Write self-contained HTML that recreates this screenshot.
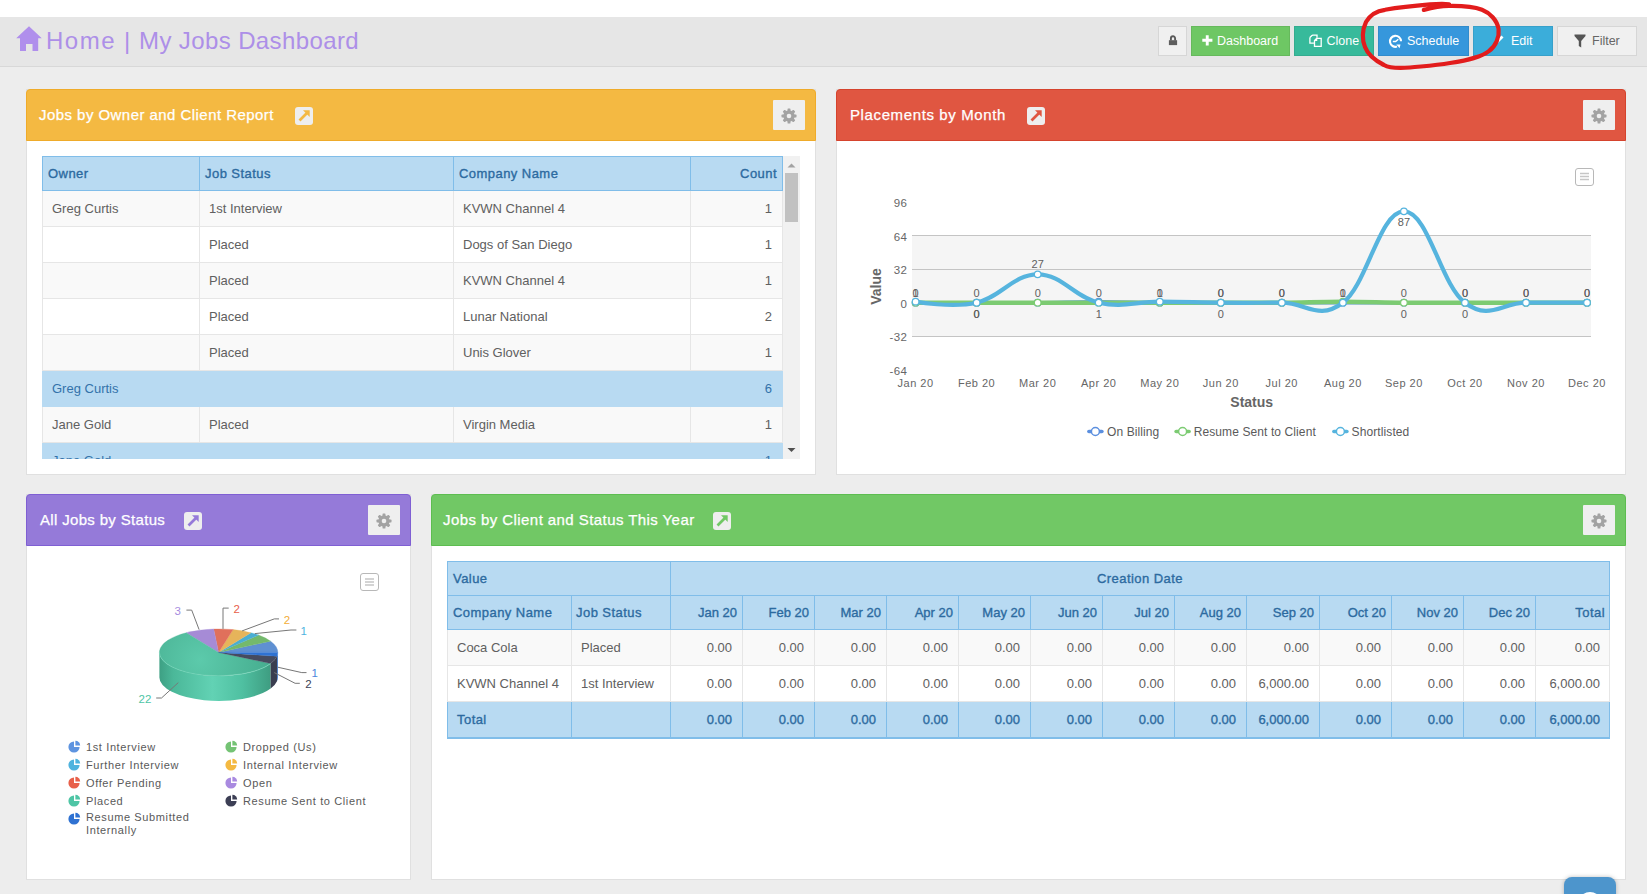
<!DOCTYPE html><html><head><meta charset="utf-8"><style>
*{box-sizing:border-box;margin:0;padding:0}
html,body{width:1647px;height:894px;overflow:hidden;background:#ededed;font-family:"Liberation Sans",sans-serif;position:relative}
.abs{position:absolute}
.topw{left:0;top:0;width:1647px;height:17px;background:#fff}
.hdr{left:0;top:17px;width:1647px;height:50px;background:#e6e6e6;border-bottom:1px solid #d8d8d8}
.title{left:48px;top:26px;font-size:24px;color:#ad8fe8;white-space:nowrap;line-height:30px;letter-spacing:0.48px}
.btn{top:26px;height:30px;color:#fff;font-size:13px;line-height:29px;white-space:nowrap;border:1px solid rgba(0,0,0,0.08)}
.panel{background:#fff;border:1px solid #e0e0e0}
.ph{border-radius:4px 4px 0 0;height:52px}
.pt{color:#fff;font-size:15px;white-space:nowrap;line-height:20px;-webkit-text-stroke:0.25px #fff}
.gear{width:32px;height:30px;background:#efefef;border-radius:1px}
.exp{width:18px;height:18px;background:#ececec;border-radius:3px}
.cell{position:absolute;white-space:nowrap;font-size:13px;line-height:16px}
</style></head><body>
<div class="abs topw"></div><div class="abs hdr"></div>
<svg class="abs" style="left:14px;top:24px" width="30" height="30" viewBox="0 0 30 30"><path d="M2.2 14.2 L15 2.2 L27.8 14.2 L24.2 14.2 L24.2 27 L18.5 27 L18.5 20 L12 20 L12 27 L6 27 L6 14.2 Z" fill="#b08fec"/></svg>
<div class="abs title" style="left:46px;letter-spacing:1.5px">Home</div><div class="abs title" style="left:124px;letter-spacing:0">|</div><div class="abs title" style="left:139px;letter-spacing:0.39px">My Jobs Dashboard</div>
<div class="abs btn" style="left:1158px;width:29px;background:#f0f0f0;border-color:#d6d6d6"></div>
<svg class="abs" style="left:1166px;top:33px" width="12" height="14" viewBox="0 0 12 14"><path d="M4.9 7.5 V5.4 A2.1 2.1 0 0 1 9.1 5.4 V7.5" fill="none" stroke="#5a5a5a" stroke-width="1.9"/><rect x="2.9" y="7.2" width="8.2" height="4.9" fill="#5e5e5e"/></svg>
<div class="abs btn" style="left:1191px;width:99px;background:#6ec764;color:#fff;border-color:rgba(0,0,0,0.07)"></div>
<svg class="abs" style="left:1202px;top:35px" width="11" height="11" viewBox="0 0 11 11"><path d="M3.8 0.3h2.9v3.5h3.7v2.9h-3.7v3.7h-2.9v-3.7h-3.5v-2.9h3.5z" fill="#fff"/></svg>
<div class="abs" style="left:1217px;top:33px;font-size:12.5px;line-height:16px;color:#fff;white-space:nowrap">Dashboard</div>
<div class="abs btn" style="left:1294px;width:80px;background:#37ba9b;color:#fff;border-color:rgba(0,0,0,0.07)"></div>
<svg class="abs" style="left:1308px;top:33px" width="16" height="16" viewBox="0 0 16 16"><path d="M4.2 2.2 H9 V4.8 M1.9 4.5 L4.2 2.2 M1.9 4.5 V10.2 H6" fill="none" stroke="#fff" stroke-width="1.3"/><path d="M8.6 5.3 H13.2 V13.3 H6.5 V7.4 Z M6.5 7.4 H8.6 V5.3" fill="none" stroke="#fff" stroke-width="1.3"/></svg>
<div class="abs" style="left:1326.5px;top:33px;font-size:12.5px;line-height:16px;color:#fff;white-space:nowrap">Clone</div>
<div class="abs btn" style="left:1378px;width:91px;background:#3697dc;color:#fff;border-color:rgba(0,0,0,0.07)"></div>
<svg class="abs" style="left:1388px;top:34px" width="16" height="16" viewBox="0 0 16 16"><path d="M13 7.3 A5.5 5.5 0 1 0 9 12.6" fill="none" stroke="#fff" stroke-width="2.1"/><path d="M8.3 10.6 L12.5 10.6 L11.6 14.2 Z" fill="#fff"/><path d="M4.8 7.6 L7.6 7.6 L10.3 5.2" fill="none" stroke="#fff" stroke-width="1.5"/></svg>
<div class="abs" style="left:1407px;top:33px;font-size:12.5px;line-height:16px;color:#fff;white-space:nowrap">Schedule</div>
<div class="abs btn" style="left:1473px;width:80px;background:#3badda;color:#fff;border-color:rgba(0,0,0,0.07)"></div>
<svg class="abs" style="left:1493px;top:34px" width="12" height="12" viewBox="0 0 12 12"><path d="M1 11 L2 8 L8.5 1.5 L10.5 3.5 L4 10 Z" fill="#fff"/></svg>
<div class="abs" style="left:1511px;top:33px;font-size:12.5px;line-height:16px;color:#fff;white-space:nowrap">Edit</div>
<div class="abs btn" style="left:1557px;width:80px;background:#f0f0f0;border-color:#d6d6d6"></div>
<svg class="abs" style="left:1574px;top:34px" width="12" height="14" viewBox="0 0 12 14"><path d="M0.5 0.5 H11.5 V2 L7.2 7 V13.5 L4.8 12 V7 L0.5 2 Z" fill="#555"/></svg>
<div class="abs" style="left:1592px;top:33px;font-size:12.5px;line-height:16px;color:#666;white-space:nowrap">Filter</div>
<svg class="abs" style="left:0;top:0" width="1647" height="80" viewBox="0 0 1647 80"><path d="M1423.8 9.9 C1432 7.8 1440 6.2 1449 6 C1462 5.8 1474 6.8 1482 9.8 C1490 13 1497 20 1498.6 29 C1499.5 37 1496 46 1489 51 C1482 57 1468 60 1450 63 C1435 65.5 1425 66 1410 67.5 C1398 68.5 1390 68.5 1384 65 C1376 61 1368 55 1365 47 C1362 40 1362 30 1366 22 C1370 15 1376 11 1385 9.8 C1398 7.5 1415 5.6 1430 4.4 C1440 3.8 1446 3.8 1449 4.4" fill="none" stroke="#e21c1c" stroke-width="4.2" stroke-linecap="round" stroke-linejoin="round"/></svg>
<div class="abs panel" style="left:26px;top:89px;width:790px;height:386px"></div>
<div class="abs ph" style="left:26px;top:89px;width:790px;background:#f4b942;border:1px solid #efab2a"></div>
<div class="abs pt" style="left:39px;top:104.5px;letter-spacing:0.450px">Jobs by Owner and Client Report</div>
<svg class="abs" style="left:295px;top:107px" width="18" height="18" viewBox="0 0 18 18"><rect x="0" y="0" width="18" height="18" rx="3" fill="#eeeeee"/><path d="M4.5 13.5 L12.5 5.5" stroke="#f4b942" stroke-width="2.6"/><path d="M8 3.3 H14.7 V10 Z" fill="#f4b942"/></svg>
<div class="abs gear" style="left:773px;top:100px"></div>
<svg class="abs" style="left:779.20px;top:105.60px" width="20" height="20" viewBox="-10 -10 20 20"><circle r="5.7" fill="#a3a3a3"/><rect x="-1.45" y="-7.5" width="2.9" height="4" rx="0.6" fill="#a3a3a3" transform="rotate(0)"/><rect x="-1.45" y="-7.5" width="2.9" height="4" rx="0.6" fill="#a3a3a3" transform="rotate(45)"/><rect x="-1.45" y="-7.5" width="2.9" height="4" rx="0.6" fill="#a3a3a3" transform="rotate(90)"/><rect x="-1.45" y="-7.5" width="2.9" height="4" rx="0.6" fill="#a3a3a3" transform="rotate(135)"/><rect x="-1.45" y="-7.5" width="2.9" height="4" rx="0.6" fill="#a3a3a3" transform="rotate(180)"/><rect x="-1.45" y="-7.5" width="2.9" height="4" rx="0.6" fill="#a3a3a3" transform="rotate(225)"/><rect x="-1.45" y="-7.5" width="2.9" height="4" rx="0.6" fill="#a3a3a3" transform="rotate(270)"/><rect x="-1.45" y="-7.5" width="2.9" height="4" rx="0.6" fill="#a3a3a3" transform="rotate(315)"/><circle r="2.3" fill="#efefef"/></svg>
<div class="abs panel" style="left:836px;top:89px;width:790px;height:386px"></div>
<div class="abs ph" style="left:836px;top:89px;width:790px;background:#e05641;border:1px solid #d5432d"></div>
<div class="abs pt" style="left:850px;top:104.5px;letter-spacing:0.620px">Placements by Month</div>
<svg class="abs" style="left:1027px;top:107px" width="18" height="18" viewBox="0 0 18 18"><rect x="0" y="0" width="18" height="18" rx="3" fill="#eeeeee"/><path d="M4.5 13.5 L12.5 5.5" stroke="#e05641" stroke-width="2.6"/><path d="M8 3.3 H14.7 V10 Z" fill="#e05641"/></svg>
<div class="abs gear" style="left:1583px;top:100px"></div>
<svg class="abs" style="left:1589.20px;top:105.60px" width="20" height="20" viewBox="-10 -10 20 20"><circle r="5.7" fill="#a3a3a3"/><rect x="-1.45" y="-7.5" width="2.9" height="4" rx="0.6" fill="#a3a3a3" transform="rotate(0)"/><rect x="-1.45" y="-7.5" width="2.9" height="4" rx="0.6" fill="#a3a3a3" transform="rotate(45)"/><rect x="-1.45" y="-7.5" width="2.9" height="4" rx="0.6" fill="#a3a3a3" transform="rotate(90)"/><rect x="-1.45" y="-7.5" width="2.9" height="4" rx="0.6" fill="#a3a3a3" transform="rotate(135)"/><rect x="-1.45" y="-7.5" width="2.9" height="4" rx="0.6" fill="#a3a3a3" transform="rotate(180)"/><rect x="-1.45" y="-7.5" width="2.9" height="4" rx="0.6" fill="#a3a3a3" transform="rotate(225)"/><rect x="-1.45" y="-7.5" width="2.9" height="4" rx="0.6" fill="#a3a3a3" transform="rotate(270)"/><rect x="-1.45" y="-7.5" width="2.9" height="4" rx="0.6" fill="#a3a3a3" transform="rotate(315)"/><circle r="2.3" fill="#efefef"/></svg>
<div class="abs panel" style="left:26px;top:494px;width:385px;height:386px"></div>
<div class="abs ph" style="left:26px;top:494px;width:385px;background:#957ad9;border:1px solid #7f5fd3"></div>
<div class="abs pt" style="left:40px;top:509.5px;letter-spacing:0.330px">All Jobs by Status</div>
<svg class="abs" style="left:184px;top:512px" width="18" height="18" viewBox="0 0 18 18"><rect x="0" y="0" width="18" height="18" rx="3" fill="#eeeeee"/><path d="M4.5 13.5 L12.5 5.5" stroke="#957ad9" stroke-width="2.6"/><path d="M8 3.3 H14.7 V10 Z" fill="#957ad9"/></svg>
<div class="abs gear" style="left:368px;top:505px"></div>
<svg class="abs" style="left:374.20px;top:510.60px" width="20" height="20" viewBox="-10 -10 20 20"><circle r="5.7" fill="#a3a3a3"/><rect x="-1.45" y="-7.5" width="2.9" height="4" rx="0.6" fill="#a3a3a3" transform="rotate(0)"/><rect x="-1.45" y="-7.5" width="2.9" height="4" rx="0.6" fill="#a3a3a3" transform="rotate(45)"/><rect x="-1.45" y="-7.5" width="2.9" height="4" rx="0.6" fill="#a3a3a3" transform="rotate(90)"/><rect x="-1.45" y="-7.5" width="2.9" height="4" rx="0.6" fill="#a3a3a3" transform="rotate(135)"/><rect x="-1.45" y="-7.5" width="2.9" height="4" rx="0.6" fill="#a3a3a3" transform="rotate(180)"/><rect x="-1.45" y="-7.5" width="2.9" height="4" rx="0.6" fill="#a3a3a3" transform="rotate(225)"/><rect x="-1.45" y="-7.5" width="2.9" height="4" rx="0.6" fill="#a3a3a3" transform="rotate(270)"/><rect x="-1.45" y="-7.5" width="2.9" height="4" rx="0.6" fill="#a3a3a3" transform="rotate(315)"/><circle r="2.3" fill="#efefef"/></svg>
<div class="abs panel" style="left:431px;top:494px;width:1195px;height:386px"></div>
<div class="abs ph" style="left:431px;top:494px;width:1195px;background:#71c865;border:1px solid #5dbd50"></div>
<div class="abs pt" style="left:443px;top:509.5px;letter-spacing:0.430px">Jobs by Client and Status This Year</div>
<svg class="abs" style="left:713px;top:512px" width="18" height="18" viewBox="0 0 18 18"><rect x="0" y="0" width="18" height="18" rx="3" fill="#eeeeee"/><path d="M4.5 13.5 L12.5 5.5" stroke="#71c865" stroke-width="2.6"/><path d="M8 3.3 H14.7 V10 Z" fill="#71c865"/></svg>
<div class="abs gear" style="left:1583px;top:505px"></div>
<svg class="abs" style="left:1589.20px;top:510.60px" width="20" height="20" viewBox="-10 -10 20 20"><circle r="5.7" fill="#a3a3a3"/><rect x="-1.45" y="-7.5" width="2.9" height="4" rx="0.6" fill="#a3a3a3" transform="rotate(0)"/><rect x="-1.45" y="-7.5" width="2.9" height="4" rx="0.6" fill="#a3a3a3" transform="rotate(45)"/><rect x="-1.45" y="-7.5" width="2.9" height="4" rx="0.6" fill="#a3a3a3" transform="rotate(90)"/><rect x="-1.45" y="-7.5" width="2.9" height="4" rx="0.6" fill="#a3a3a3" transform="rotate(135)"/><rect x="-1.45" y="-7.5" width="2.9" height="4" rx="0.6" fill="#a3a3a3" transform="rotate(180)"/><rect x="-1.45" y="-7.5" width="2.9" height="4" rx="0.6" fill="#a3a3a3" transform="rotate(225)"/><rect x="-1.45" y="-7.5" width="2.9" height="4" rx="0.6" fill="#a3a3a3" transform="rotate(270)"/><rect x="-1.45" y="-7.5" width="2.9" height="4" rx="0.6" fill="#a3a3a3" transform="rotate(315)"/><circle r="2.3" fill="#efefef"/></svg>
<div class="abs" style="left:1564px;top:877px;width:52px;height:40px;background:#4d95cc;border-radius:8px;box-shadow:0 0 4px rgba(0,0,0,0.25)"></div>
<div class="abs" style="left:1578px;top:892px;width:24px;height:14px;background:#fff;border-radius:12px 12px 0 0"></div>
<div class="abs" style="left:42px;top:156px;width:758px;height:303px;overflow:hidden">
<div class="abs" style="left:0px;top:0px;width:741px;height:35px;background:#b8daf2;border:1px solid #80bde9"></div>
<div class="abs" style="left:157px;top:0px;width:1px;height:35px;background:#80bde9;"></div>
<div class="abs" style="left:411px;top:0px;width:1px;height:35px;background:#80bde9;"></div>
<div class="abs" style="left:648px;top:0px;width:1px;height:35px;background:#80bde9;"></div>
<div class="abs" style="left:6px;top:0px;height:35px;line-height:35px;font-size:13px;color:#2c6aa0;white-space:nowrap;font-weight:normal;-webkit-text-stroke:0.35px #2c6aa0;letter-spacing:0.45px;">Owner</div>
<div class="abs" style="left:163px;top:0px;height:35px;line-height:35px;font-size:13px;color:#2c6aa0;white-space:nowrap;font-weight:normal;-webkit-text-stroke:0.35px #2c6aa0;letter-spacing:0.45px;">Job Status</div>
<div class="abs" style="left:417px;top:0px;height:35px;line-height:35px;font-size:13px;color:#2c6aa0;white-space:nowrap;font-weight:normal;-webkit-text-stroke:0.35px #2c6aa0;letter-spacing:0.45px;">Company Name</div>
<div class="abs" style="right:23px;top:0px;height:35px;line-height:35px;font-size:13px;color:#2c6aa0;white-space:nowrap;font-weight:normal;-webkit-text-stroke:0.35px #2c6aa0;letter-spacing:0.45px;">Count</div>
<div class="abs" style="left:0px;top:35px;width:741px;height:36px;background:#f9f9f9;border-bottom:1px solid #e6e6e6;border-left:1px solid #e6e6e6;border-right:1px solid #e6e6e6"></div>
<div class="abs" style="left:157px;top:35px;width:1px;height:36px;background:#e6e6e6;"></div>
<div class="abs" style="left:411px;top:35px;width:1px;height:36px;background:#e6e6e6;"></div>
<div class="abs" style="left:648px;top:35px;width:1px;height:36px;background:#e6e6e6;"></div>
<div class="abs" style="left:10px;top:35px;height:36px;line-height:36px;font-size:13px;color:#606060;white-space:nowrap;">Greg Curtis</div>
<div class="abs" style="left:167px;top:35px;height:36px;line-height:36px;font-size:13px;color:#606060;white-space:nowrap;">1st Interview</div>
<div class="abs" style="left:421px;top:35px;height:36px;line-height:36px;font-size:13px;color:#606060;white-space:nowrap;">KVWN Channel 4</div>
<div class="abs" style="right:28px;top:35px;height:36px;line-height:36px;font-size:13px;color:#606060;white-space:nowrap;">1</div>
<div class="abs" style="left:0px;top:71px;width:741px;height:36px;background:#ffffff;border-bottom:1px solid #e6e6e6;border-left:1px solid #e6e6e6;border-right:1px solid #e6e6e6"></div>
<div class="abs" style="left:157px;top:71px;width:1px;height:36px;background:#e6e6e6;"></div>
<div class="abs" style="left:411px;top:71px;width:1px;height:36px;background:#e6e6e6;"></div>
<div class="abs" style="left:648px;top:71px;width:1px;height:36px;background:#e6e6e6;"></div>
<div class="abs" style="left:10px;top:71px;height:36px;line-height:36px;font-size:13px;color:#606060;white-space:nowrap;"></div>
<div class="abs" style="left:167px;top:71px;height:36px;line-height:36px;font-size:13px;color:#606060;white-space:nowrap;">Placed</div>
<div class="abs" style="left:421px;top:71px;height:36px;line-height:36px;font-size:13px;color:#606060;white-space:nowrap;">Dogs of San Diego</div>
<div class="abs" style="right:28px;top:71px;height:36px;line-height:36px;font-size:13px;color:#606060;white-space:nowrap;">1</div>
<div class="abs" style="left:0px;top:107px;width:741px;height:36px;background:#f9f9f9;border-bottom:1px solid #e6e6e6;border-left:1px solid #e6e6e6;border-right:1px solid #e6e6e6"></div>
<div class="abs" style="left:157px;top:107px;width:1px;height:36px;background:#e6e6e6;"></div>
<div class="abs" style="left:411px;top:107px;width:1px;height:36px;background:#e6e6e6;"></div>
<div class="abs" style="left:648px;top:107px;width:1px;height:36px;background:#e6e6e6;"></div>
<div class="abs" style="left:10px;top:107px;height:36px;line-height:36px;font-size:13px;color:#606060;white-space:nowrap;"></div>
<div class="abs" style="left:167px;top:107px;height:36px;line-height:36px;font-size:13px;color:#606060;white-space:nowrap;">Placed</div>
<div class="abs" style="left:421px;top:107px;height:36px;line-height:36px;font-size:13px;color:#606060;white-space:nowrap;">KVWN Channel 4</div>
<div class="abs" style="right:28px;top:107px;height:36px;line-height:36px;font-size:13px;color:#606060;white-space:nowrap;">1</div>
<div class="abs" style="left:0px;top:143px;width:741px;height:36px;background:#ffffff;border-bottom:1px solid #e6e6e6;border-left:1px solid #e6e6e6;border-right:1px solid #e6e6e6"></div>
<div class="abs" style="left:157px;top:143px;width:1px;height:36px;background:#e6e6e6;"></div>
<div class="abs" style="left:411px;top:143px;width:1px;height:36px;background:#e6e6e6;"></div>
<div class="abs" style="left:648px;top:143px;width:1px;height:36px;background:#e6e6e6;"></div>
<div class="abs" style="left:10px;top:143px;height:36px;line-height:36px;font-size:13px;color:#606060;white-space:nowrap;"></div>
<div class="abs" style="left:167px;top:143px;height:36px;line-height:36px;font-size:13px;color:#606060;white-space:nowrap;">Placed</div>
<div class="abs" style="left:421px;top:143px;height:36px;line-height:36px;font-size:13px;color:#606060;white-space:nowrap;">Lunar National</div>
<div class="abs" style="right:28px;top:143px;height:36px;line-height:36px;font-size:13px;color:#606060;white-space:nowrap;">2</div>
<div class="abs" style="left:0px;top:179px;width:741px;height:36px;background:#f9f9f9;border-bottom:1px solid #e6e6e6;border-left:1px solid #e6e6e6;border-right:1px solid #e6e6e6"></div>
<div class="abs" style="left:157px;top:179px;width:1px;height:36px;background:#e6e6e6;"></div>
<div class="abs" style="left:411px;top:179px;width:1px;height:36px;background:#e6e6e6;"></div>
<div class="abs" style="left:648px;top:179px;width:1px;height:36px;background:#e6e6e6;"></div>
<div class="abs" style="left:10px;top:179px;height:36px;line-height:36px;font-size:13px;color:#606060;white-space:nowrap;"></div>
<div class="abs" style="left:167px;top:179px;height:36px;line-height:36px;font-size:13px;color:#606060;white-space:nowrap;">Placed</div>
<div class="abs" style="left:421px;top:179px;height:36px;line-height:36px;font-size:13px;color:#606060;white-space:nowrap;">Unis Glover</div>
<div class="abs" style="right:28px;top:179px;height:36px;line-height:36px;font-size:13px;color:#606060;white-space:nowrap;">1</div>
<div class="abs" style="left:0px;top:215px;width:741px;height:36px;background:#b8daf2;"></div>
<div class="abs" style="left:10px;top:215px;height:36px;line-height:36px;font-size:13px;color:#3372aa;white-space:nowrap;">Greg Curtis</div>
<div class="abs" style="right:28px;top:215px;height:36px;line-height:36px;font-size:13px;color:#3372aa;white-space:nowrap;">6</div>
<div class="abs" style="left:0px;top:251px;width:741px;height:36px;background:#f9f9f9;border-bottom:1px solid #e6e6e6;border-left:1px solid #e6e6e6;border-right:1px solid #e6e6e6"></div>
<div class="abs" style="left:157px;top:251px;width:1px;height:36px;background:#e6e6e6;"></div>
<div class="abs" style="left:411px;top:251px;width:1px;height:36px;background:#e6e6e6;"></div>
<div class="abs" style="left:648px;top:251px;width:1px;height:36px;background:#e6e6e6;"></div>
<div class="abs" style="left:10px;top:251px;height:36px;line-height:36px;font-size:13px;color:#606060;white-space:nowrap;">Jane Gold</div>
<div class="abs" style="left:167px;top:251px;height:36px;line-height:36px;font-size:13px;color:#606060;white-space:nowrap;">Placed</div>
<div class="abs" style="left:421px;top:251px;height:36px;line-height:36px;font-size:13px;color:#606060;white-space:nowrap;">Virgin Media</div>
<div class="abs" style="right:28px;top:251px;height:36px;line-height:36px;font-size:13px;color:#606060;white-space:nowrap;">1</div>
<div class="abs" style="left:0px;top:287px;width:741px;height:36px;background:#b8daf2;"></div>
<div class="abs" style="left:10px;top:287px;height:36px;line-height:36px;font-size:13px;color:#3372aa;white-space:nowrap;">Jane Gold</div>
<div class="abs" style="right:28px;top:287px;height:36px;line-height:36px;font-size:13px;color:#3372aa;white-space:nowrap;">1</div>
<div class="abs" style="left:741px;top:0px;width:17px;height:303px;background:#f1f1f1;"></div>
<div class="abs" style="left:743px;top:17px;width:13px;height:49px;background:#c1c1c1;"></div>
</div>
<svg class="abs" style="left:786px;top:160px" width="12" height="10"><path d="M1.5 7.5 L5.5 3.5 L9.5 7.5 Z" fill="#a3a3a3"/></svg>
<svg class="abs" style="left:786px;top:445px" width="12" height="10"><path d="M1.5 3 L5.5 7 L9.5 3 Z" fill="#505050"/></svg>
<svg class="abs" style="left:836px;top:141px" width="790" height="334" viewBox="836 141 790 334">
<rect x="912" y="235.5" width="679" height="101" fill="#f5f5f5"/>
<line x1="912" x2="1591" y1="235.5" y2="235.5" stroke="#c4c4c4" stroke-width="1"/>
<line x1="912" x2="1591" y1="269.5" y2="269.5" stroke="#c4c4c4" stroke-width="1"/>
<line x1="912" x2="1591" y1="336.5" y2="336.5" stroke="#c4c4c4" stroke-width="1"/>
<text x="907.5" y="206.9" text-anchor="end" style="font-family:'Liberation Sans',sans-serif;font-size:11px;fill:#666;font-size:11.5px;letter-spacing:0.5px">96</text>
<text x="907.5" y="240.5" text-anchor="end" style="font-family:'Liberation Sans',sans-serif;font-size:11px;fill:#666;font-size:11.5px;letter-spacing:0.5px">64</text>
<text x="907.5" y="274.1" text-anchor="end" style="font-family:'Liberation Sans',sans-serif;font-size:11px;fill:#666;font-size:11.5px;letter-spacing:0.5px">32</text>
<text x="907.5" y="307.7" text-anchor="end" style="font-family:'Liberation Sans',sans-serif;font-size:11px;fill:#666;font-size:11.5px;letter-spacing:0.5px">0</text>
<text x="907.5" y="341.3" text-anchor="end" style="font-family:'Liberation Sans',sans-serif;font-size:11px;fill:#666;font-size:11.5px;letter-spacing:0.5px">-32</text>
<text x="907.5" y="374.9" text-anchor="end" style="font-family:'Liberation Sans',sans-serif;font-size:11px;fill:#666;font-size:11.5px;letter-spacing:0.5px">-64</text>
<text x="915.6" y="387" text-anchor="middle" style="font-family:'Liberation Sans',sans-serif;font-size:11px;fill:#666;letter-spacing:0.5px">Jan 20</text>
<text x="976.6" y="387" text-anchor="middle" style="font-family:'Liberation Sans',sans-serif;font-size:11px;fill:#666;letter-spacing:0.5px">Feb 20</text>
<text x="1037.7" y="387" text-anchor="middle" style="font-family:'Liberation Sans',sans-serif;font-size:11px;fill:#666;letter-spacing:0.5px">Mar 20</text>
<text x="1098.7" y="387" text-anchor="middle" style="font-family:'Liberation Sans',sans-serif;font-size:11px;fill:#666;letter-spacing:0.5px">Apr 20</text>
<text x="1159.8" y="387" text-anchor="middle" style="font-family:'Liberation Sans',sans-serif;font-size:11px;fill:#666;letter-spacing:0.5px">May 20</text>
<text x="1220.8" y="387" text-anchor="middle" style="font-family:'Liberation Sans',sans-serif;font-size:11px;fill:#666;letter-spacing:0.5px">Jun 20</text>
<text x="1281.8" y="387" text-anchor="middle" style="font-family:'Liberation Sans',sans-serif;font-size:11px;fill:#666;letter-spacing:0.5px">Jul 20</text>
<text x="1342.9" y="387" text-anchor="middle" style="font-family:'Liberation Sans',sans-serif;font-size:11px;fill:#666;letter-spacing:0.5px">Aug 20</text>
<text x="1403.9" y="387" text-anchor="middle" style="font-family:'Liberation Sans',sans-serif;font-size:11px;fill:#666;letter-spacing:0.5px">Sep 20</text>
<text x="1465.0" y="387" text-anchor="middle" style="font-family:'Liberation Sans',sans-serif;font-size:11px;fill:#666;letter-spacing:0.5px">Oct 20</text>
<text x="1526.0" y="387" text-anchor="middle" style="font-family:'Liberation Sans',sans-serif;font-size:11px;fill:#666;letter-spacing:0.5px">Nov 20</text>
<text x="1587.0" y="387" text-anchor="middle" style="font-family:'Liberation Sans',sans-serif;font-size:11px;fill:#666;letter-spacing:0.5px">Dec 20</text>
<text x="0" y="0" transform="translate(881 286.5) rotate(-90)" text-anchor="middle" style="font-family:'Liberation Sans',sans-serif;font-size:14px;font-weight:bold;fill:#666">Value</text>
<text x="1251.7" y="407" text-anchor="middle" style="font-family:'Liberation Sans',sans-serif;font-size:14px;font-weight:bold;fill:#666">Status</text>
<path d="M 915.60 302.70 C 915.60 302.70 952.22 302.70 976.64 302.70 C 1001.06 302.70 1013.26 302.91 1037.68 302.70 C 1062.10 302.49 1074.30 301.65 1098.72 301.65 C 1123.14 301.65 1135.34 302.49 1159.76 302.70 C 1184.18 302.91 1196.38 302.70 1220.80 302.70 C 1245.22 302.70 1257.42 302.70 1281.84 302.70 C 1306.26 302.70 1318.46 302.70 1342.88 302.70 C 1367.30 302.70 1379.50 302.70 1403.92 302.70 C 1428.34 302.70 1440.54 302.70 1464.96 302.70 C 1489.38 302.70 1501.58 302.70 1526.00 302.70 C 1550.42 302.70 1587.04 302.70 1587.04 302.70" fill="none" stroke="#5b8fdf" stroke-width="3.5" stroke-linecap="round" stroke-linejoin="round"/>
<circle cx="915.60" cy="302.70" r="3.3" fill="#fff" stroke="#5b8fdf" stroke-width="1.2"/>
<circle cx="976.64" cy="302.70" r="3.3" fill="#fff" stroke="#5b8fdf" stroke-width="1.2"/>
<circle cx="1037.68" cy="302.70" r="3.3" fill="#fff" stroke="#5b8fdf" stroke-width="1.2"/>
<circle cx="1098.72" cy="301.65" r="3.3" fill="#fff" stroke="#5b8fdf" stroke-width="1.2"/>
<circle cx="1159.76" cy="302.70" r="3.3" fill="#fff" stroke="#5b8fdf" stroke-width="1.2"/>
<circle cx="1220.80" cy="302.70" r="3.3" fill="#fff" stroke="#5b8fdf" stroke-width="1.2"/>
<circle cx="1281.84" cy="302.70" r="3.3" fill="#fff" stroke="#5b8fdf" stroke-width="1.2"/>
<circle cx="1342.88" cy="302.70" r="3.3" fill="#fff" stroke="#5b8fdf" stroke-width="1.2"/>
<circle cx="1403.92" cy="302.70" r="3.3" fill="#fff" stroke="#5b8fdf" stroke-width="1.2"/>
<circle cx="1464.96" cy="302.70" r="3.3" fill="#fff" stroke="#5b8fdf" stroke-width="1.2"/>
<circle cx="1526.00" cy="302.70" r="3.3" fill="#fff" stroke="#5b8fdf" stroke-width="1.2"/>
<circle cx="1587.04" cy="302.70" r="3.3" fill="#fff" stroke="#5b8fdf" stroke-width="1.2"/>
<path d="M 915.60 302.70 C 915.60 302.70 952.22 302.70 976.64 302.70 C 1001.06 302.70 1013.26 302.70 1037.68 302.70 C 1062.10 302.70 1074.30 302.70 1098.72 302.70 C 1123.14 302.70 1135.34 302.70 1159.76 302.70 C 1184.18 302.70 1196.38 302.70 1220.80 302.70 C 1245.22 302.70 1257.42 302.91 1281.84 302.70 C 1306.26 302.49 1318.46 301.65 1342.88 301.65 C 1367.30 301.65 1379.50 302.49 1403.92 302.70 C 1428.34 302.91 1440.54 302.70 1464.96 302.70 C 1489.38 302.70 1501.58 302.70 1526.00 302.70 C 1550.42 302.70 1587.04 302.70 1587.04 302.70" fill="none" stroke="#7ccb72" stroke-width="4.5" stroke-linecap="round" stroke-linejoin="round"/>
<circle cx="915.60" cy="302.70" r="3.3" fill="#fff" stroke="#7ccb72" stroke-width="1.2"/>
<circle cx="976.64" cy="302.70" r="3.3" fill="#fff" stroke="#7ccb72" stroke-width="1.2"/>
<circle cx="1037.68" cy="302.70" r="3.3" fill="#fff" stroke="#7ccb72" stroke-width="1.2"/>
<circle cx="1098.72" cy="302.70" r="3.3" fill="#fff" stroke="#7ccb72" stroke-width="1.2"/>
<circle cx="1159.76" cy="302.70" r="3.3" fill="#fff" stroke="#7ccb72" stroke-width="1.2"/>
<circle cx="1220.80" cy="302.70" r="3.3" fill="#fff" stroke="#7ccb72" stroke-width="1.2"/>
<circle cx="1281.84" cy="302.70" r="3.3" fill="#fff" stroke="#7ccb72" stroke-width="1.2"/>
<circle cx="1342.88" cy="301.65" r="3.3" fill="#fff" stroke="#7ccb72" stroke-width="1.2"/>
<circle cx="1403.92" cy="302.70" r="3.3" fill="#fff" stroke="#7ccb72" stroke-width="1.2"/>
<circle cx="1464.96" cy="302.70" r="3.3" fill="#fff" stroke="#7ccb72" stroke-width="1.2"/>
<circle cx="1526.00" cy="302.70" r="3.3" fill="#fff" stroke="#7ccb72" stroke-width="1.2"/>
<circle cx="1587.04" cy="302.70" r="3.3" fill="#fff" stroke="#7ccb72" stroke-width="1.2"/>
<path d="M 915.60 301.65 C 915.60 301.65 952.22 308.16 976.64 302.70 C 1001.06 297.24 1013.26 274.35 1037.68 274.35 C 1062.10 274.35 1074.30 297.24 1098.72 302.70 C 1123.14 308.16 1135.34 301.65 1159.76 301.65 C 1184.18 301.65 1196.38 302.49 1220.80 302.70 C 1245.22 302.91 1257.42 302.70 1281.84 302.70 C 1306.26 302.70 1318.46 320.97 1342.88 302.70 C 1367.30 284.43 1379.50 211.35 1403.92 211.35 C 1428.34 211.35 1440.54 284.43 1464.96 302.70 C 1489.38 320.97 1501.58 302.70 1526.00 302.70 C 1550.42 302.70 1587.04 302.70 1587.04 302.70" fill="none" stroke="#56b4de" stroke-width="4.2" stroke-linecap="round" stroke-linejoin="round"/>
<circle cx="915.60" cy="301.65" r="3.3" fill="#fff" stroke="#56b4de" stroke-width="1.2"/>
<circle cx="976.64" cy="302.70" r="3.3" fill="#fff" stroke="#56b4de" stroke-width="1.2"/>
<circle cx="1037.68" cy="274.35" r="3.3" fill="#fff" stroke="#56b4de" stroke-width="1.2"/>
<circle cx="1098.72" cy="302.70" r="3.3" fill="#fff" stroke="#56b4de" stroke-width="1.2"/>
<circle cx="1159.76" cy="301.65" r="3.3" fill="#fff" stroke="#56b4de" stroke-width="1.2"/>
<circle cx="1220.80" cy="302.70" r="3.3" fill="#fff" stroke="#56b4de" stroke-width="1.2"/>
<circle cx="1281.84" cy="302.70" r="3.3" fill="#fff" stroke="#56b4de" stroke-width="1.2"/>
<circle cx="1342.88" cy="302.70" r="3.3" fill="#fff" stroke="#56b4de" stroke-width="1.2"/>
<circle cx="1403.92" cy="211.35" r="3.3" fill="#fff" stroke="#56b4de" stroke-width="1.2"/>
<circle cx="1464.96" cy="302.70" r="3.3" fill="#fff" stroke="#56b4de" stroke-width="1.2"/>
<circle cx="1526.00" cy="302.70" r="3.3" fill="#fff" stroke="#56b4de" stroke-width="1.2"/>
<circle cx="1587.04" cy="302.70" r="3.3" fill="#fff" stroke="#56b4de" stroke-width="1.2"/>
<text x="915.6" y="296.7" text-anchor="middle" style="font-family:'Liberation Sans',sans-serif;font-size:11px;fill:#606060">0</text>
<text x="915.6" y="296.7" text-anchor="middle" style="font-family:'Liberation Sans',sans-serif;font-size:11px;fill:#606060">1</text>
<text x="976.6" y="296.7" text-anchor="middle" style="font-family:'Liberation Sans',sans-serif;font-size:11px;fill:#606060">0</text>
<text x="1037.7" y="296.7" text-anchor="middle" style="font-family:'Liberation Sans',sans-serif;font-size:11px;fill:#606060">0</text>
<text x="1098.7" y="296.7" text-anchor="middle" style="font-family:'Liberation Sans',sans-serif;font-size:11px;fill:#606060">0</text>
<text x="1159.8" y="296.7" text-anchor="middle" style="font-family:'Liberation Sans',sans-serif;font-size:11px;fill:#606060">0</text>
<text x="1159.8" y="296.7" text-anchor="middle" style="font-family:'Liberation Sans',sans-serif;font-size:11px;fill:#606060">1</text>
<text x="1220.8" y="296.7" text-anchor="middle" style="font-family:'Liberation Sans',sans-serif;font-size:11px;fill:#606060">0</text>
<text x="1220.8" y="296.7" text-anchor="middle" style="font-family:'Liberation Sans',sans-serif;font-size:11px;fill:#606060">0</text>
<text x="1281.8" y="296.7" text-anchor="middle" style="font-family:'Liberation Sans',sans-serif;font-size:11px;fill:#606060">0</text>
<text x="1281.8" y="296.7" text-anchor="middle" style="font-family:'Liberation Sans',sans-serif;font-size:11px;fill:#606060">0</text>
<text x="1342.9" y="296.7" text-anchor="middle" style="font-family:'Liberation Sans',sans-serif;font-size:11px;fill:#606060">0</text>
<text x="1342.9" y="296.7" text-anchor="middle" style="font-family:'Liberation Sans',sans-serif;font-size:11px;fill:#606060">1</text>
<text x="1403.9" y="296.7" text-anchor="middle" style="font-family:'Liberation Sans',sans-serif;font-size:11px;fill:#606060">0</text>
<text x="1465.0" y="296.7" text-anchor="middle" style="font-family:'Liberation Sans',sans-serif;font-size:11px;fill:#606060">0</text>
<text x="1465.0" y="296.7" text-anchor="middle" style="font-family:'Liberation Sans',sans-serif;font-size:11px;fill:#606060">0</text>
<text x="1526.0" y="296.7" text-anchor="middle" style="font-family:'Liberation Sans',sans-serif;font-size:11px;fill:#606060">0</text>
<text x="1526.0" y="296.7" text-anchor="middle" style="font-family:'Liberation Sans',sans-serif;font-size:11px;fill:#606060">0</text>
<text x="1587.0" y="296.7" text-anchor="middle" style="font-family:'Liberation Sans',sans-serif;font-size:11px;fill:#606060">0</text>
<text x="1587.0" y="296.7" text-anchor="middle" style="font-family:'Liberation Sans',sans-serif;font-size:11px;fill:#606060">0</text>
<text x="976.6" y="317.7" text-anchor="middle" style="font-family:'Liberation Sans',sans-serif;font-size:11px;fill:#606060">0</text>
<text x="976.6" y="317.7" text-anchor="middle" style="font-family:'Liberation Sans',sans-serif;font-size:11px;fill:#606060">0</text>
<text x="1098.7" y="317.7" text-anchor="middle" style="font-family:'Liberation Sans',sans-serif;font-size:11px;fill:#606060">1</text>
<text x="1220.8" y="317.7" text-anchor="middle" style="font-family:'Liberation Sans',sans-serif;font-size:11px;fill:#606060">0</text>
<text x="1403.9" y="317.7" text-anchor="middle" style="font-family:'Liberation Sans',sans-serif;font-size:11px;fill:#606060">0</text>
<text x="1465.0" y="317.7" text-anchor="middle" style="font-family:'Liberation Sans',sans-serif;font-size:11px;fill:#606060">0</text>
<text x="1037.7" y="268.3" text-anchor="middle" style="font-family:'Liberation Sans',sans-serif;font-size:11px;fill:#606060">27</text>
<text x="1403.9" y="225.8" text-anchor="middle" style="font-family:'Liberation Sans',sans-serif;font-size:11px;fill:#606060">87</text>
<line x1="1088.9" x2="1101.9" y1="431.5" y2="431.5" stroke="#5b8fdf" stroke-width="3.6" stroke-linecap="round"/>
<circle cx="1095.4" cy="431.5" r="4" fill="#fff" stroke="#5b8fdf" stroke-width="1.5"/>
<text x="1107.0" y="435.8" style="font-family:'Liberation Sans',sans-serif;font-size:12px;fill:#5a5a5a;letter-spacing:0.1px">On Billing</text>
<line x1="1176.1" x2="1189.1" y1="431.5" y2="431.5" stroke="#7ccb72" stroke-width="3.6" stroke-linecap="round"/>
<circle cx="1182.6" cy="431.5" r="4" fill="#fff" stroke="#7ccb72" stroke-width="1.5"/>
<text x="1193.7" y="435.8" style="font-family:'Liberation Sans',sans-serif;font-size:12px;fill:#5a5a5a;letter-spacing:0.1px">Resume Sent to Client</text>
<line x1="1333.9" x2="1346.9" y1="431.5" y2="431.5" stroke="#56b4de" stroke-width="3.6" stroke-linecap="round"/>
<circle cx="1340.4" cy="431.5" r="4" fill="#fff" stroke="#56b4de" stroke-width="1.5"/>
<text x="1351.6" y="435.8" style="font-family:'Liberation Sans',sans-serif;font-size:12px;fill:#5a5a5a;letter-spacing:0.1px">Shortlisted</text>
<rect x="1575.5" y="168.5" width="18" height="17" rx="2.5" fill="#fff" stroke="#b8b8b8" stroke-width="1"/>
<line x1="1580" x2="1589" y1="173.5" y2="173.5" stroke="#c6c6c6" stroke-width="1.5"/>
<line x1="1580" x2="1589" y1="176.5" y2="176.5" stroke="#c6c6c6" stroke-width="1.5"/>
<line x1="1580" x2="1589" y1="179.5" y2="179.5" stroke="#c6c6c6" stroke-width="1.5"/>
</svg>
<svg class="abs" style="left:27px;top:546px" width="383" height="333" viewBox="27 546 383 333">
<defs><linearGradient id="tealside" x1="159" x2="278" y1="0" y2="0" gradientUnits="userSpaceOnUse"><stop offset="0" stop-color="#3d9f83"/><stop offset="0.12" stop-color="#4bb899"/><stop offset="0.45" stop-color="#62d2b4"/><stop offset="0.7" stop-color="#4fc0a1"/><stop offset="1" stop-color="#3a9479"/></linearGradient><radialGradient id="tealtop" cx="200" cy="660" r="70" gradientUnits="userSpaceOnUse"><stop offset="0" stop-color="#5ccaab"/><stop offset="1" stop-color="#46ad8f"/></radialGradient></defs>
<path d="M270.66 663.58 A59.20 23.50 0 0 1 159.40 652.40 L159.40 677.40 A59.20 23.50 0 0 0 270.66 688.58 Z" fill="url(#tealside)"/>
<path d="M276.99 656.27 A59.20 23.50 0 0 1 270.66 663.58 L270.66 688.58 A59.20 23.50 0 0 0 276.99 681.27 Z" fill="#3a3e50"/>
<path d="M277.80 652.40 A59.20 23.50 0 0 1 276.99 656.27 L276.99 681.27 A59.20 23.50 0 0 0 277.80 677.40 Z" fill="#2a66bd"/>
<path d="M218.60 652.40 L270.66 641.22 A59.20 23.50 0 0 1 277.80 652.40 Z" fill="#5f90d2" stroke="#5f90d2" stroke-width="0.3"/>
<path d="M218.60 652.40 L258.70 635.11 A59.20 23.50 0 0 1 270.66 641.22 Z" fill="#74b96c" stroke="#74b96c" stroke-width="0.3"/>
<path d="M218.60 652.40 L250.98 632.73 A59.20 23.50 0 0 1 258.70 635.11 Z" fill="#4aaed2" stroke="#4aaed2" stroke-width="0.3"/>
<path d="M218.60 652.40 L233.13 629.62 A59.20 23.50 0 0 1 250.98 632.73 Z" fill="#e6b45a" stroke="#e6b45a" stroke-width="0.3"/>
<path d="M218.60 652.40 L213.71 628.98 A59.20 23.50 0 0 1 233.13 629.62 Z" fill="#e0705b" stroke="#e0705b" stroke-width="0.3"/>
<path d="M218.60 652.40 L186.22 632.73 A59.20 23.50 0 0 1 213.71 628.98 Z" fill="#a68bd6" stroke="#a68bd6" stroke-width="0.3"/>
<path d="M218.60 652.40 L270.66 663.58 A59.20 23.50 0 1 1 186.22 632.73 Z" fill="url(#tealtop)" stroke="#50b99a" stroke-width="0.3"/>
<path d="M218.60 652.40 L276.99 656.27 A59.20 23.50 0 0 1 270.66 663.58 Z" fill="#464b5f" stroke="#464b5f" stroke-width="0.3"/>
<path d="M218.60 652.40 L277.80 652.40 A59.20 23.50 0 0 1 276.99 656.27 Z" fill="#2f72d2" stroke="#2f72d2" stroke-width="0.3"/>
<path d="M270.68 663.58 A59.20 23.50 0 0 1 159.40 652.40" fill="none" stroke="#7fdcc2" stroke-width="0.8" opacity="0.7"/>
<path d="M186.4 610.1 L191.7 610.1 L199.1 629.6" fill="none" stroke="#777" stroke-width="1"/>
<text x="177.6" y="615.0" text-anchor="middle" style="font-family:'Liberation Sans',sans-serif;font-size:11.5px;fill:#a68be0">3</text>
<path d="M228.7 608.1 L223.0 608.1 L223.0 628.9" fill="none" stroke="#777" stroke-width="1"/>
<text x="236.7" y="613.0" text-anchor="middle" style="font-family:'Liberation Sans',sans-serif;font-size:11.5px;fill:#e8604a">2</text>
<path d="M279.0 618.9 L274.3 618.9 L242.1 630.9" fill="none" stroke="#777" stroke-width="1"/>
<text x="287.0" y="624.4" text-anchor="middle" style="font-family:'Liberation Sans',sans-serif;font-size:11.5px;fill:#f2ad38">2</text>
<path d="M296.4 630.0 L291.0 630.0 L254.8 633.6" fill="none" stroke="#777" stroke-width="1"/>
<text x="303.8" y="635.2" text-anchor="middle" style="font-family:'Liberation Sans',sans-serif;font-size:11.5px;fill:#4fb3e0">1</text>
<path d="M306.5 672.6 L301.8 672.6 L277.7 667.2" fill="none" stroke="#777" stroke-width="1"/>
<text x="314.6" y="677.4" text-anchor="middle" style="font-family:'Liberation Sans',sans-serif;font-size:11.5px;fill:#4d86dc">1</text>
<path d="M299.8 683.3 L295.1 683.3 L274.3 672.6" fill="none" stroke="#777" stroke-width="1"/>
<text x="308.5" y="688.2" text-anchor="middle" style="font-family:'Liberation Sans',sans-serif;font-size:11.5px;fill:#3c3f55">2</text>
<path d="M156.2 698.0 L161.5 698.0 L178.3 682.6" fill="none" stroke="#777" stroke-width="1"/>
<text x="145.0" y="702.9" text-anchor="middle" style="font-family:'Liberation Sans',sans-serif;font-size:11.5px;fill:#4ec5a5">22</text>
<rect x="360.5" y="573.5" width="18" height="17" rx="2.5" fill="#fff" stroke="#b8b8b8" stroke-width="1"/>
<line x1="365" x2="374" y1="579" y2="579" stroke="#c6c6c6" stroke-width="1.5"/>
<line x1="365" x2="374" y1="582" y2="582" stroke="#c6c6c6" stroke-width="1.5"/>
<line x1="365" x2="374" y1="585" y2="585" stroke="#c6c6c6" stroke-width="1.5"/>
<path d="M74.00 747.00 L79.60 747.00 A5.60 5.60 0 1 1 74.00 741.40 Z" fill="#5e94e0"/>
<path d="M75.40 745.60 L75.40 740.80 A4.80 4.80 0 0 1 80.20 745.60 Z" fill="#5e94e0"/>
<text x="86" y="751.0" style="font-family:'Liberation Sans',sans-serif;font-size:11px;fill:#595959;letter-spacing:0.62px">1st Interview</text>
<path d="M74.00 765.00 L79.60 765.00 A5.60 5.60 0 1 1 74.00 759.40 Z" fill="#4fb3de"/>
<path d="M75.40 763.60 L75.40 758.80 A4.80 4.80 0 0 1 80.20 763.60 Z" fill="#4fb3de"/>
<text x="86" y="769.0" style="font-family:'Liberation Sans',sans-serif;font-size:11px;fill:#595959;letter-spacing:0.62px">Further Interview</text>
<path d="M74.00 783.00 L79.60 783.00 A5.60 5.60 0 1 1 74.00 777.40 Z" fill="#e8604a"/>
<path d="M75.40 781.60 L75.40 776.80 A4.80 4.80 0 0 1 80.20 781.60 Z" fill="#e8604a"/>
<text x="86" y="787.0" style="font-family:'Liberation Sans',sans-serif;font-size:11px;fill:#595959;letter-spacing:0.62px">Offer Pending</text>
<path d="M74.00 801.00 L79.60 801.00 A5.60 5.60 0 1 1 74.00 795.40 Z" fill="#4ec5a5"/>
<path d="M75.40 799.60 L75.40 794.80 A4.80 4.80 0 0 1 80.20 799.60 Z" fill="#4ec5a5"/>
<text x="86" y="805.0" style="font-family:'Liberation Sans',sans-serif;font-size:11px;fill:#595959;letter-spacing:0.62px">Placed</text>
<path d="M74.00 819.00 L79.60 819.00 A5.60 5.60 0 1 1 74.00 813.40 Z" fill="#2f72d2"/>
<path d="M75.40 817.60 L75.40 812.80 A4.80 4.80 0 0 1 80.20 817.60 Z" fill="#2f72d2"/>
<text x="86" y="821.0" style="font-family:'Liberation Sans',sans-serif;font-size:11px;fill:#595959;letter-spacing:0.62px">Resume Submitted</text>
<text x="86" y="834.0" style="font-family:'Liberation Sans',sans-serif;font-size:11px;fill:#595959;letter-spacing:0.62px">Internally</text>
<path d="M231.00 747.00 L236.60 747.00 A5.60 5.60 0 1 1 231.00 741.40 Z" fill="#74c374"/>
<path d="M232.40 745.60 L232.40 740.80 A4.80 4.80 0 0 1 237.20 745.60 Z" fill="#74c374"/>
<text x="243" y="751.0" style="font-family:'Liberation Sans',sans-serif;font-size:11px;fill:#595959;letter-spacing:0.62px">Dropped (Us)</text>
<path d="M231.00 765.00 L236.60 765.00 A5.60 5.60 0 1 1 231.00 759.40 Z" fill="#f4b942"/>
<path d="M232.40 763.60 L232.40 758.80 A4.80 4.80 0 0 1 237.20 763.60 Z" fill="#f4b942"/>
<text x="243" y="769.0" style="font-family:'Liberation Sans',sans-serif;font-size:11px;fill:#595959;letter-spacing:0.62px">Internal Interview</text>
<path d="M231.00 783.00 L236.60 783.00 A5.60 5.60 0 1 1 231.00 777.40 Z" fill="#a98ae0"/>
<path d="M232.40 781.60 L232.40 776.80 A4.80 4.80 0 0 1 237.20 781.60 Z" fill="#a98ae0"/>
<text x="243" y="787.0" style="font-family:'Liberation Sans',sans-serif;font-size:11px;fill:#595959;letter-spacing:0.62px">Open</text>
<path d="M231.00 801.00 L236.60 801.00 A5.60 5.60 0 1 1 231.00 795.40 Z" fill="#3c3f55"/>
<path d="M232.40 799.60 L232.40 794.80 A4.80 4.80 0 0 1 237.20 799.60 Z" fill="#3c3f55"/>
<text x="243" y="805.0" style="font-family:'Liberation Sans',sans-serif;font-size:11px;fill:#595959;letter-spacing:0.62px">Resume Sent to Client</text>
</svg>
<div class="abs" style="left:447px;top:561px;width:1163px;height:69px;background:#b8daf2;border:1px solid #80bde9"></div>
<div class="abs" style="left:447px;top:595px;width:1163px;height:1px;background:#80bde9;"></div>
<div class="abs" style="left:670px;top:561px;width:1px;height:69px;background:#80bde9;"></div>
<div class="abs" style="left:571px;top:595px;width:1px;height:35px;background:#80bde9;"></div>
<div class="abs" style="left:742px;top:595px;width:1px;height:35px;background:#80bde9;"></div>
<div class="abs" style="left:814px;top:595px;width:1px;height:35px;background:#80bde9;"></div>
<div class="abs" style="left:886px;top:595px;width:1px;height:35px;background:#80bde9;"></div>
<div class="abs" style="left:958px;top:595px;width:1px;height:35px;background:#80bde9;"></div>
<div class="abs" style="left:1030px;top:595px;width:1px;height:35px;background:#80bde9;"></div>
<div class="abs" style="left:1102px;top:595px;width:1px;height:35px;background:#80bde9;"></div>
<div class="abs" style="left:1174px;top:595px;width:1px;height:35px;background:#80bde9;"></div>
<div class="abs" style="left:1246px;top:595px;width:1px;height:35px;background:#80bde9;"></div>
<div class="abs" style="left:1319px;top:595px;width:1px;height:35px;background:#80bde9;"></div>
<div class="abs" style="left:1391px;top:595px;width:1px;height:35px;background:#80bde9;"></div>
<div class="abs" style="left:1463px;top:595px;width:1px;height:35px;background:#80bde9;"></div>
<div class="abs" style="left:1535px;top:595px;width:1px;height:35px;background:#80bde9;"></div>
<div class="abs" style="left:453px;top:562px;height:34px;line-height:34px;font-size:13px;color:#2c6aa0;white-space:nowrap;font-weight:normal;-webkit-text-stroke:0.35px #2c6aa0;letter-spacing:0.45px;">Value</div>
<div class="abs" style="left:670px;width:940px;text-align:center;top:562px;height:34px;line-height:34px;font-size:13px;color:#2c6aa0;white-space:nowrap;font-weight:normal;-webkit-text-stroke:0.35px #2c6aa0;letter-spacing:0.45px;">Creation Date</div>
<div class="abs" style="left:453px;top:596px;height:34px;line-height:34px;font-size:13px;color:#2c6aa0;white-space:nowrap;font-weight:normal;-webkit-text-stroke:0.35px #2c6aa0;letter-spacing:0.45px;">Company Name</div>
<div class="abs" style="left:576px;top:596px;height:34px;line-height:34px;font-size:13px;color:#2c6aa0;white-space:nowrap;font-weight:normal;-webkit-text-stroke:0.35px #2c6aa0;letter-spacing:0.45px;">Job Status</div>
<div class="abs" style="left:537px;width:200px;text-align:right;top:596px;height:34px;line-height:34px;font-size:13px;color:#2c6aa0;white-space:nowrap;font-weight:normal;-webkit-text-stroke:0.35px #2c6aa0;letter-spacing:0px;">Jan 20</div>
<div class="abs" style="left:609px;width:200px;text-align:right;top:596px;height:34px;line-height:34px;font-size:13px;color:#2c6aa0;white-space:nowrap;font-weight:normal;-webkit-text-stroke:0.35px #2c6aa0;letter-spacing:0px;">Feb 20</div>
<div class="abs" style="left:681px;width:200px;text-align:right;top:596px;height:34px;line-height:34px;font-size:13px;color:#2c6aa0;white-space:nowrap;font-weight:normal;-webkit-text-stroke:0.35px #2c6aa0;letter-spacing:0px;">Mar 20</div>
<div class="abs" style="left:753px;width:200px;text-align:right;top:596px;height:34px;line-height:34px;font-size:13px;color:#2c6aa0;white-space:nowrap;font-weight:normal;-webkit-text-stroke:0.35px #2c6aa0;letter-spacing:0px;">Apr 20</div>
<div class="abs" style="left:825px;width:200px;text-align:right;top:596px;height:34px;line-height:34px;font-size:13px;color:#2c6aa0;white-space:nowrap;font-weight:normal;-webkit-text-stroke:0.35px #2c6aa0;letter-spacing:0px;">May 20</div>
<div class="abs" style="left:897px;width:200px;text-align:right;top:596px;height:34px;line-height:34px;font-size:13px;color:#2c6aa0;white-space:nowrap;font-weight:normal;-webkit-text-stroke:0.35px #2c6aa0;letter-spacing:0px;">Jun 20</div>
<div class="abs" style="left:969px;width:200px;text-align:right;top:596px;height:34px;line-height:34px;font-size:13px;color:#2c6aa0;white-space:nowrap;font-weight:normal;-webkit-text-stroke:0.35px #2c6aa0;letter-spacing:0px;">Jul 20</div>
<div class="abs" style="left:1041px;width:200px;text-align:right;top:596px;height:34px;line-height:34px;font-size:13px;color:#2c6aa0;white-space:nowrap;font-weight:normal;-webkit-text-stroke:0.35px #2c6aa0;letter-spacing:0px;">Aug 20</div>
<div class="abs" style="left:1114px;width:200px;text-align:right;top:596px;height:34px;line-height:34px;font-size:13px;color:#2c6aa0;white-space:nowrap;font-weight:normal;-webkit-text-stroke:0.35px #2c6aa0;letter-spacing:0px;">Sep 20</div>
<div class="abs" style="left:1186px;width:200px;text-align:right;top:596px;height:34px;line-height:34px;font-size:13px;color:#2c6aa0;white-space:nowrap;font-weight:normal;-webkit-text-stroke:0.35px #2c6aa0;letter-spacing:0px;">Oct 20</div>
<div class="abs" style="left:1258px;width:200px;text-align:right;top:596px;height:34px;line-height:34px;font-size:13px;color:#2c6aa0;white-space:nowrap;font-weight:normal;-webkit-text-stroke:0.35px #2c6aa0;letter-spacing:0px;">Nov 20</div>
<div class="abs" style="left:1330px;width:200px;text-align:right;top:596px;height:34px;line-height:34px;font-size:13px;color:#2c6aa0;white-space:nowrap;font-weight:normal;-webkit-text-stroke:0.35px #2c6aa0;letter-spacing:0px;">Dec 20</div>
<div class="abs" style="left:1405px;width:200px;text-align:right;top:596px;height:34px;line-height:34px;font-size:13px;color:#2c6aa0;white-space:nowrap;font-weight:normal;-webkit-text-stroke:0.35px #2c6aa0;letter-spacing:0.45px;">Total</div>
<div class="abs" style="left:447px;top:630px;width:1163px;height:36px;background:#f9f9f9;border-bottom:1px solid #e6e6e6;border-left:1px solid #e6e6e6;border-right:1px solid #e6e6e6"></div>
<div class="abs" style="left:571px;top:630px;width:1px;height:36px;background:#e6e6e6;"></div>
<div class="abs" style="left:670px;top:630px;width:1px;height:36px;background:#e6e6e6;"></div>
<div class="abs" style="left:742px;top:630px;width:1px;height:36px;background:#e6e6e6;"></div>
<div class="abs" style="left:814px;top:630px;width:1px;height:36px;background:#e6e6e6;"></div>
<div class="abs" style="left:886px;top:630px;width:1px;height:36px;background:#e6e6e6;"></div>
<div class="abs" style="left:958px;top:630px;width:1px;height:36px;background:#e6e6e6;"></div>
<div class="abs" style="left:1030px;top:630px;width:1px;height:36px;background:#e6e6e6;"></div>
<div class="abs" style="left:1102px;top:630px;width:1px;height:36px;background:#e6e6e6;"></div>
<div class="abs" style="left:1174px;top:630px;width:1px;height:36px;background:#e6e6e6;"></div>
<div class="abs" style="left:1246px;top:630px;width:1px;height:36px;background:#e6e6e6;"></div>
<div class="abs" style="left:1319px;top:630px;width:1px;height:36px;background:#e6e6e6;"></div>
<div class="abs" style="left:1391px;top:630px;width:1px;height:36px;background:#e6e6e6;"></div>
<div class="abs" style="left:1463px;top:630px;width:1px;height:36px;background:#e6e6e6;"></div>
<div class="abs" style="left:1535px;top:630px;width:1px;height:36px;background:#e6e6e6;"></div>
<div class="abs" style="left:457px;top:630px;height:36px;line-height:36px;font-size:13px;color:#606060;white-space:nowrap;">Coca Cola</div>
<div class="abs" style="left:581px;top:630px;height:36px;line-height:36px;font-size:13px;color:#606060;white-space:nowrap;">Placed</div>
<div class="abs" style="left:532px;width:200px;text-align:right;top:630px;height:36px;line-height:36px;font-size:13px;color:#606060;white-space:nowrap;">0.00</div>
<div class="abs" style="left:604px;width:200px;text-align:right;top:630px;height:36px;line-height:36px;font-size:13px;color:#606060;white-space:nowrap;">0.00</div>
<div class="abs" style="left:676px;width:200px;text-align:right;top:630px;height:36px;line-height:36px;font-size:13px;color:#606060;white-space:nowrap;">0.00</div>
<div class="abs" style="left:748px;width:200px;text-align:right;top:630px;height:36px;line-height:36px;font-size:13px;color:#606060;white-space:nowrap;">0.00</div>
<div class="abs" style="left:820px;width:200px;text-align:right;top:630px;height:36px;line-height:36px;font-size:13px;color:#606060;white-space:nowrap;">0.00</div>
<div class="abs" style="left:892px;width:200px;text-align:right;top:630px;height:36px;line-height:36px;font-size:13px;color:#606060;white-space:nowrap;">0.00</div>
<div class="abs" style="left:964px;width:200px;text-align:right;top:630px;height:36px;line-height:36px;font-size:13px;color:#606060;white-space:nowrap;">0.00</div>
<div class="abs" style="left:1036px;width:200px;text-align:right;top:630px;height:36px;line-height:36px;font-size:13px;color:#606060;white-space:nowrap;">0.00</div>
<div class="abs" style="left:1109px;width:200px;text-align:right;top:630px;height:36px;line-height:36px;font-size:13px;color:#606060;white-space:nowrap;">0.00</div>
<div class="abs" style="left:1181px;width:200px;text-align:right;top:630px;height:36px;line-height:36px;font-size:13px;color:#606060;white-space:nowrap;">0.00</div>
<div class="abs" style="left:1253px;width:200px;text-align:right;top:630px;height:36px;line-height:36px;font-size:13px;color:#606060;white-space:nowrap;">0.00</div>
<div class="abs" style="left:1325px;width:200px;text-align:right;top:630px;height:36px;line-height:36px;font-size:13px;color:#606060;white-space:nowrap;">0.00</div>
<div class="abs" style="left:1400px;width:200px;text-align:right;top:630px;height:36px;line-height:36px;font-size:13px;color:#606060;white-space:nowrap;">0.00</div>
<div class="abs" style="left:447px;top:666px;width:1163px;height:36px;background:#ffffff;border-bottom:1px solid #e6e6e6;border-left:1px solid #e6e6e6;border-right:1px solid #e6e6e6"></div>
<div class="abs" style="left:571px;top:666px;width:1px;height:36px;background:#e6e6e6;"></div>
<div class="abs" style="left:670px;top:666px;width:1px;height:36px;background:#e6e6e6;"></div>
<div class="abs" style="left:742px;top:666px;width:1px;height:36px;background:#e6e6e6;"></div>
<div class="abs" style="left:814px;top:666px;width:1px;height:36px;background:#e6e6e6;"></div>
<div class="abs" style="left:886px;top:666px;width:1px;height:36px;background:#e6e6e6;"></div>
<div class="abs" style="left:958px;top:666px;width:1px;height:36px;background:#e6e6e6;"></div>
<div class="abs" style="left:1030px;top:666px;width:1px;height:36px;background:#e6e6e6;"></div>
<div class="abs" style="left:1102px;top:666px;width:1px;height:36px;background:#e6e6e6;"></div>
<div class="abs" style="left:1174px;top:666px;width:1px;height:36px;background:#e6e6e6;"></div>
<div class="abs" style="left:1246px;top:666px;width:1px;height:36px;background:#e6e6e6;"></div>
<div class="abs" style="left:1319px;top:666px;width:1px;height:36px;background:#e6e6e6;"></div>
<div class="abs" style="left:1391px;top:666px;width:1px;height:36px;background:#e6e6e6;"></div>
<div class="abs" style="left:1463px;top:666px;width:1px;height:36px;background:#e6e6e6;"></div>
<div class="abs" style="left:1535px;top:666px;width:1px;height:36px;background:#e6e6e6;"></div>
<div class="abs" style="left:457px;top:666px;height:36px;line-height:36px;font-size:13px;color:#606060;white-space:nowrap;">KVWN Channel 4</div>
<div class="abs" style="left:581px;top:666px;height:36px;line-height:36px;font-size:13px;color:#606060;white-space:nowrap;">1st Interview</div>
<div class="abs" style="left:532px;width:200px;text-align:right;top:666px;height:36px;line-height:36px;font-size:13px;color:#606060;white-space:nowrap;">0.00</div>
<div class="abs" style="left:604px;width:200px;text-align:right;top:666px;height:36px;line-height:36px;font-size:13px;color:#606060;white-space:nowrap;">0.00</div>
<div class="abs" style="left:676px;width:200px;text-align:right;top:666px;height:36px;line-height:36px;font-size:13px;color:#606060;white-space:nowrap;">0.00</div>
<div class="abs" style="left:748px;width:200px;text-align:right;top:666px;height:36px;line-height:36px;font-size:13px;color:#606060;white-space:nowrap;">0.00</div>
<div class="abs" style="left:820px;width:200px;text-align:right;top:666px;height:36px;line-height:36px;font-size:13px;color:#606060;white-space:nowrap;">0.00</div>
<div class="abs" style="left:892px;width:200px;text-align:right;top:666px;height:36px;line-height:36px;font-size:13px;color:#606060;white-space:nowrap;">0.00</div>
<div class="abs" style="left:964px;width:200px;text-align:right;top:666px;height:36px;line-height:36px;font-size:13px;color:#606060;white-space:nowrap;">0.00</div>
<div class="abs" style="left:1036px;width:200px;text-align:right;top:666px;height:36px;line-height:36px;font-size:13px;color:#606060;white-space:nowrap;">0.00</div>
<div class="abs" style="left:1109px;width:200px;text-align:right;top:666px;height:36px;line-height:36px;font-size:13px;color:#606060;white-space:nowrap;">6,000.00</div>
<div class="abs" style="left:1181px;width:200px;text-align:right;top:666px;height:36px;line-height:36px;font-size:13px;color:#606060;white-space:nowrap;">0.00</div>
<div class="abs" style="left:1253px;width:200px;text-align:right;top:666px;height:36px;line-height:36px;font-size:13px;color:#606060;white-space:nowrap;">0.00</div>
<div class="abs" style="left:1325px;width:200px;text-align:right;top:666px;height:36px;line-height:36px;font-size:13px;color:#606060;white-space:nowrap;">0.00</div>
<div class="abs" style="left:1400px;width:200px;text-align:right;top:666px;height:36px;line-height:36px;font-size:13px;color:#606060;white-space:nowrap;">6,000.00</div>
<div class="abs" style="left:447px;top:702px;width:1163px;height:37px;background:#b8daf2;border:1px solid #80bde9;border-top:0;border-bottom-width:2px"></div>
<div class="abs" style="left:571px;top:702px;width:1px;height:37px;background:#80bde9;"></div>
<div class="abs" style="left:670px;top:702px;width:1px;height:37px;background:#80bde9;"></div>
<div class="abs" style="left:742px;top:702px;width:1px;height:37px;background:#80bde9;"></div>
<div class="abs" style="left:814px;top:702px;width:1px;height:37px;background:#80bde9;"></div>
<div class="abs" style="left:886px;top:702px;width:1px;height:37px;background:#80bde9;"></div>
<div class="abs" style="left:958px;top:702px;width:1px;height:37px;background:#80bde9;"></div>
<div class="abs" style="left:1030px;top:702px;width:1px;height:37px;background:#80bde9;"></div>
<div class="abs" style="left:1102px;top:702px;width:1px;height:37px;background:#80bde9;"></div>
<div class="abs" style="left:1174px;top:702px;width:1px;height:37px;background:#80bde9;"></div>
<div class="abs" style="left:1246px;top:702px;width:1px;height:37px;background:#80bde9;"></div>
<div class="abs" style="left:1319px;top:702px;width:1px;height:37px;background:#80bde9;"></div>
<div class="abs" style="left:1391px;top:702px;width:1px;height:37px;background:#80bde9;"></div>
<div class="abs" style="left:1463px;top:702px;width:1px;height:37px;background:#80bde9;"></div>
<div class="abs" style="left:1535px;top:702px;width:1px;height:37px;background:#80bde9;"></div>
<div class="abs" style="left:457px;top:702px;height:36px;line-height:36px;font-size:13px;color:#2c6aa0;white-space:nowrap;font-weight:normal;-webkit-text-stroke:0.35px #2c6aa0;letter-spacing:0.45px;">Total</div>
<div class="abs" style="left:532px;width:200px;text-align:right;top:702px;height:36px;line-height:36px;font-size:13px;color:#2c6aa0;white-space:nowrap;font-weight:normal;-webkit-text-stroke:0.35px #2c6aa0;letter-spacing:0px;">0.00</div>
<div class="abs" style="left:604px;width:200px;text-align:right;top:702px;height:36px;line-height:36px;font-size:13px;color:#2c6aa0;white-space:nowrap;font-weight:normal;-webkit-text-stroke:0.35px #2c6aa0;letter-spacing:0px;">0.00</div>
<div class="abs" style="left:676px;width:200px;text-align:right;top:702px;height:36px;line-height:36px;font-size:13px;color:#2c6aa0;white-space:nowrap;font-weight:normal;-webkit-text-stroke:0.35px #2c6aa0;letter-spacing:0px;">0.00</div>
<div class="abs" style="left:748px;width:200px;text-align:right;top:702px;height:36px;line-height:36px;font-size:13px;color:#2c6aa0;white-space:nowrap;font-weight:normal;-webkit-text-stroke:0.35px #2c6aa0;letter-spacing:0px;">0.00</div>
<div class="abs" style="left:820px;width:200px;text-align:right;top:702px;height:36px;line-height:36px;font-size:13px;color:#2c6aa0;white-space:nowrap;font-weight:normal;-webkit-text-stroke:0.35px #2c6aa0;letter-spacing:0px;">0.00</div>
<div class="abs" style="left:892px;width:200px;text-align:right;top:702px;height:36px;line-height:36px;font-size:13px;color:#2c6aa0;white-space:nowrap;font-weight:normal;-webkit-text-stroke:0.35px #2c6aa0;letter-spacing:0px;">0.00</div>
<div class="abs" style="left:964px;width:200px;text-align:right;top:702px;height:36px;line-height:36px;font-size:13px;color:#2c6aa0;white-space:nowrap;font-weight:normal;-webkit-text-stroke:0.35px #2c6aa0;letter-spacing:0px;">0.00</div>
<div class="abs" style="left:1036px;width:200px;text-align:right;top:702px;height:36px;line-height:36px;font-size:13px;color:#2c6aa0;white-space:nowrap;font-weight:normal;-webkit-text-stroke:0.35px #2c6aa0;letter-spacing:0px;">0.00</div>
<div class="abs" style="left:1109px;width:200px;text-align:right;top:702px;height:36px;line-height:36px;font-size:13px;color:#2c6aa0;white-space:nowrap;font-weight:normal;-webkit-text-stroke:0.35px #2c6aa0;letter-spacing:0px;">6,000.00</div>
<div class="abs" style="left:1181px;width:200px;text-align:right;top:702px;height:36px;line-height:36px;font-size:13px;color:#2c6aa0;white-space:nowrap;font-weight:normal;-webkit-text-stroke:0.35px #2c6aa0;letter-spacing:0px;">0.00</div>
<div class="abs" style="left:1253px;width:200px;text-align:right;top:702px;height:36px;line-height:36px;font-size:13px;color:#2c6aa0;white-space:nowrap;font-weight:normal;-webkit-text-stroke:0.35px #2c6aa0;letter-spacing:0px;">0.00</div>
<div class="abs" style="left:1325px;width:200px;text-align:right;top:702px;height:36px;line-height:36px;font-size:13px;color:#2c6aa0;white-space:nowrap;font-weight:normal;-webkit-text-stroke:0.35px #2c6aa0;letter-spacing:0px;">0.00</div>
<div class="abs" style="left:1400px;width:200px;text-align:right;top:702px;height:36px;line-height:36px;font-size:13px;color:#2c6aa0;white-space:nowrap;font-weight:normal;-webkit-text-stroke:0.35px #2c6aa0;letter-spacing:0px;">6,000.00</div>
</body></html>
